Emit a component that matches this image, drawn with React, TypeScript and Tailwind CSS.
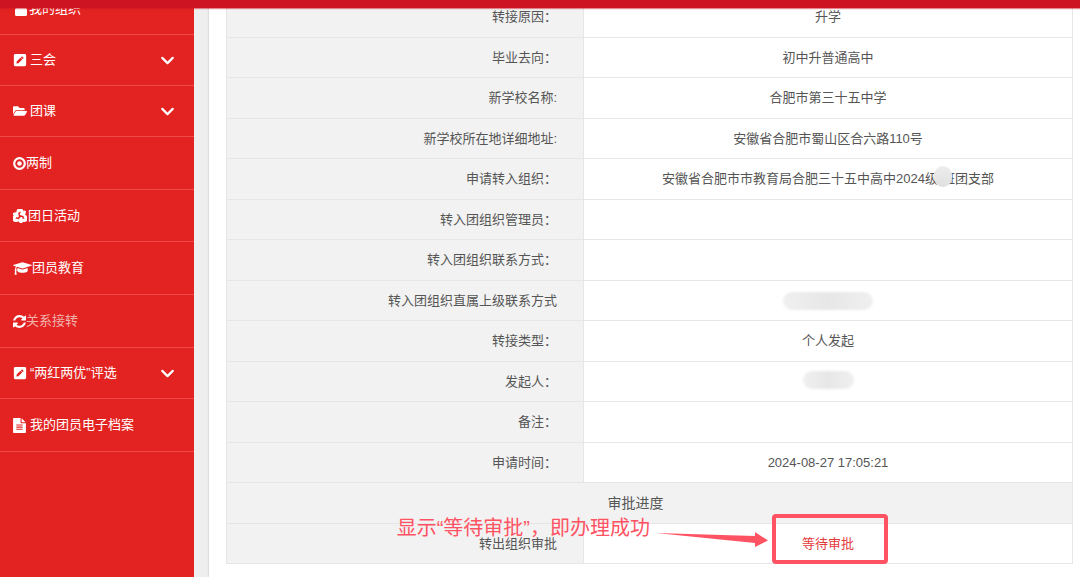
import type { ReactNode } from "react";
import { FaFolderOpen, FaPenSquare, FaRecycle } from "react-icons/fa";
import { ChevronDown } from "lucide-react";

const BullseyeIcon = () => (
  <svg width="13" height="13" viewBox="0 0 13 13" aria-hidden="true">
    <circle cx="6.5" cy="6.5" r="5.3" fill="none" stroke="currentColor" strokeWidth="2.2" />
    <circle cx="6.5" cy="6.5" r="2.3" fill="currentColor" />
  </svg>
);

const LockIcon = () => (
  <svg width="12" height="14" viewBox="0 0 12 14" aria-hidden="true">
    <path d="M3 7V4a3 3 0 0 1 6 0v3" fill="none" stroke="currentColor" strokeWidth="2" />
    <rect y="6" width="12" height="8" rx="1.5" fill="currentColor" />
  </svg>
);

const CapIcon = () => (
  <svg width="19" height="15" viewBox="0 0 2304 1792" fill="currentColor" aria-hidden="true">
    <path d="M1774 836l18 316q4 69-82 128t-235 93.500-323 34.500-323-34.500-235-93.500-82-128l18-316 574 181q22 7 48 7t48-7zm530-324q0 23-22 31l-1120 352q-4 1-10 1t-10-1l-652-206q-43 34-71 111.500t-34 178.500q63 36 63 109 0 69-58 107l58 433q2 14-8 25-9 11-24 11h-192q-15 0-24-11-10-11-8-25l58-433q-58-38-58-107 0-73 65-111 11-207 98-330l-333-104q-22-8-22-31t22-31l1120-352q4-1 10-1t10 1l1120 352q22 8 22 31z" />
  </svg>
);

const RefreshIcon = () => (
  <svg width="13" height="13" viewBox="128 128 1536 1536" fill="currentColor" aria-hidden="true">
    <path d="M1639 1056q0 5-1 7-64 268-268 434.500t-478 166.500q-146 0-282.500-55t-243.500-157l-129 129q-19 19-45 19t-45-19-19-45v-448q0-26 19-45t45-19h448q26 0 45 19t19 45-19 45l-137 137q71 66 161 102t187 36q134 0 250-65t186-179q11-17 53-117 8-23 30-23h192q13 0 22.500 9.500t9.500 22.500zm25-800v448q0 26-19 45t-45 19h-448q-26 0-45-19t-19-45 19-45l138-138q-148-137-349-137-134 0-250 65t-186 179q-11 17-53 117-8 23-30 23h-199q-13 0-22.500-9.500t-9.500-22.500v-7q65-268 270-434.500t480-166.500q146 0 284 55.500t245 156.500l130-129q19-19 45-19t45 19 19 45z" />
  </svg>
);

const FileIcon = () => (
  <svg width="13" height="15" viewBox="128 0 1536 1792" fill="currentColor" aria-hidden="true">
    <path d="M1596 476q14 14 28 36h-472v-472q22 14 36 28zm-476 164h544v1056q0 40-28 68t-68 28h-1344q-40 0-68-28t-28-68v-1600q0-40 28-68t68-28h800v544q0 40 28 68t68 28zm160 736v-64q0-14-9-23t-23-9h-704q-14 0-23 9t-9 23v64q0 14 9 23t23 9h704q14 0 23-9t9-23zm0-256v-64q0-14-9-23t-23-9h-704q-14 0-23 9t-9 23v64q0 14 9 23t23 9h704q14 0 23-9t9-23zm0-256v-64q0-14-9-23t-23-9h-704q-14 0-23 9t-9 23v64q0 14 9 23t23 9h704q14 0 23-9t9-23z" />
  </svg>
);

type MenuItem = {
  label: string;
  icon: ReactNode;
  height: string;
  gap?: string;
  color?: string;
  expandable?: boolean;
};

const menu: MenuItem[] = [
  { label: "我的组织", icon: <LockIcon />, height: "h-[51px]", gap: "pl-[2px] gap-[2px]" },
  { label: "三会", icon: <FaPenSquare size={14} />, height: "h-[51px]", gap: "gap-[3px]", expandable: true },
  { label: "团课", icon: <FaFolderOpen size={14} />, height: "h-[51px]", gap: "gap-[3px]", expandable: true },
  { label: "两制", icon: <BullseyeIcon />, height: "h-[53px]" },
  {
    label: "团日活动",
    icon: <FaRecycle size={14} stroke="currentColor" strokeWidth={56} />,
    height: "h-[52px]",
    gap: "gap-px",
  },
  { label: "团员教育", icon: <CapIcon />, height: "h-[53px]" },
  { label: "关系接转", icon: <RefreshIcon />, height: "h-[53px]", color: "text-[#f0b2ac]" },
  { label: "“两红两优”评选", icon: <FaPenSquare size={14} />, height: "h-[51px]", gap: "gap-[3px]", expandable: true },
  { label: "我的团员电子档案", icon: <FileIcon />, height: "h-[53px]", gap: "gap-1" },
];

type Row = { label: string; value?: ReactNode };

const rows: Row[] = [
  { label: "转接原因：", value: "升学" },
  { label: "毕业去向：", value: "初中升普通高中" },
  { label: "新学校名称:", value: "合肥市第三十五中学" },
  { label: "新学校所在地详细地址:", value: "安徽省合肥市蜀山区合六路110号" },
  {
    label: "申请转入组织：",
    value: (
      <>
        安徽省合肥市市教育局合肥三十五中高中2024级
        <span className="relative inline-block w-1">
          <span className="absolute -bottom-1 -left-1 h-[21px] w-[18px] rounded-full bg-linear-to-b from-[#ededed] to-[#e0e0e0]" />
        </span>
        班团支部
      </>
    ),
  },
  { label: "转入团组织管理员：" },
  { label: "转入团组织联系方式：" },
  {
    label: "转入团组织直属上级联系方式",
    value: <Smudge className="w-[90px]" />,
  },
  { label: "转接类型：", value: "个人发起" },
  { label: "发起人：", value: <Smudge className="mb-1 w-[51px]" /> },
  { label: "备注：" },
  { label: "申请时间：", value: "2024-08-27 17:05:21" },
];

function Smudge({ className }: { className: string }) {
  return (
    <span
      className={`mx-auto block h-[18px] rounded-full bg-linear-to-r from-[#f0f0f0] via-[#e7e7e7] to-[#f0f0f0] blur-[1px] ${className}`}
    />
  );
}

function Sidebar() {
  return (
    <nav className="w-[194px] shrink-0 bg-[#e32322] text-white">
      <ul>
        {menu.map((item) => {
          const content = (
            <>
              <span className={`flex items-center ${item.gap ?? ""}`}>
                {item.icon}
                <span className={item.color}>{item.label}</span>
              </span>
              {item.expandable && <ChevronDown size={21} strokeWidth={2.5} />}
            </>
          );
          const style = "flex h-full w-full items-center justify-between pr-4 pl-[13px]";
          return (
            <li key={item.label} className={`border-b border-[#f04a48] ${item.height}`}>
              {item.expandable ? (
                <button type="button" className={style}>
                  {content}
                </button>
              ) : (
                <a href="#" className={style}>
                  {content}
                </a>
              )}
            </li>
          );
        })}
      </ul>
    </nav>
  );
}

function Callout() {
  return (
    <div className="absolute right-1/2 -top-[10px] -mr-[60px] flex items-start whitespace-nowrap text-[#ff5364]">
      <span className="text-xl leading-7">显示“等待审批”，即办理成功</span>
      <svg width="118" height="50" viewBox="0 0 118 50" className="ml-1" aria-hidden="true">
        <path d="M2 19 L101 22 L101 18 L114 26.500 L101 33 L101 29 Z" fill="currentColor" />
      </svg>
      <div className="h-[50px] w-[116px] rounded-[4px] border-4 border-[#ff5364]" />
    </div>
  );
}

function DetailTable() {
  return (
    <table className="w-full border-collapse text-center">
      <tbody>
        {rows.map((row) => (
          <tr key={row.label} className="h-[41px] even:h-[40px]">
            <th
              scope="row"
              className="w-[42.2%] border border-[#e6e6e6] bg-[#f2f2f2] pr-[26px] text-right font-normal"
            >
              {row.label}
            </th>
            <td className="border border-[#e6e6e6]">{row.value}</td>
          </tr>
        ))}
        <tr className="h-[41px]">
          <th colSpan={2} className="border border-[#e6e6e6] bg-[#f2f2f2] pr-7 text-sm font-normal">
            审批进度
          </th>
        </tr>
        <tr className="h-[40px]">
          <th
            scope="row"
            className="border border-[#e6e6e6] bg-[#f2f2f2] pr-[26px] text-right font-normal"
          >
            转出组织审批
          </th>
          <td className="relative border border-[#e6e6e6] text-[#e33b3b]">
            等待审批
            <Callout />
          </td>
        </tr>
      </tbody>
    </table>
  );
}

export default function App() {
  return (
    <div
      lang="zh-CN"
      className="flex h-screen flex-col overflow-hidden bg-[#efefef] font-['Liberation_Sans','Noto_Sans_CJK_SC',sans-serif] text-[13px] leading-5 text-[#555]"
    >
      <header className="z-10 h-2 shrink-0 bg-[#cc1422] shadow-[0_1px_1px_#cc142280]" />
      <div className="-mt-6 flex min-h-0 flex-1">
        <Sidebar />
        <main className="ml-[15px] min-w-0 flex-1 bg-white pt-3 pr-[7px] pl-[17px] shadow-[0_0_2px_#bbb]">
          <DetailTable />
        </main>
      </div>
    </div>
  );
}
